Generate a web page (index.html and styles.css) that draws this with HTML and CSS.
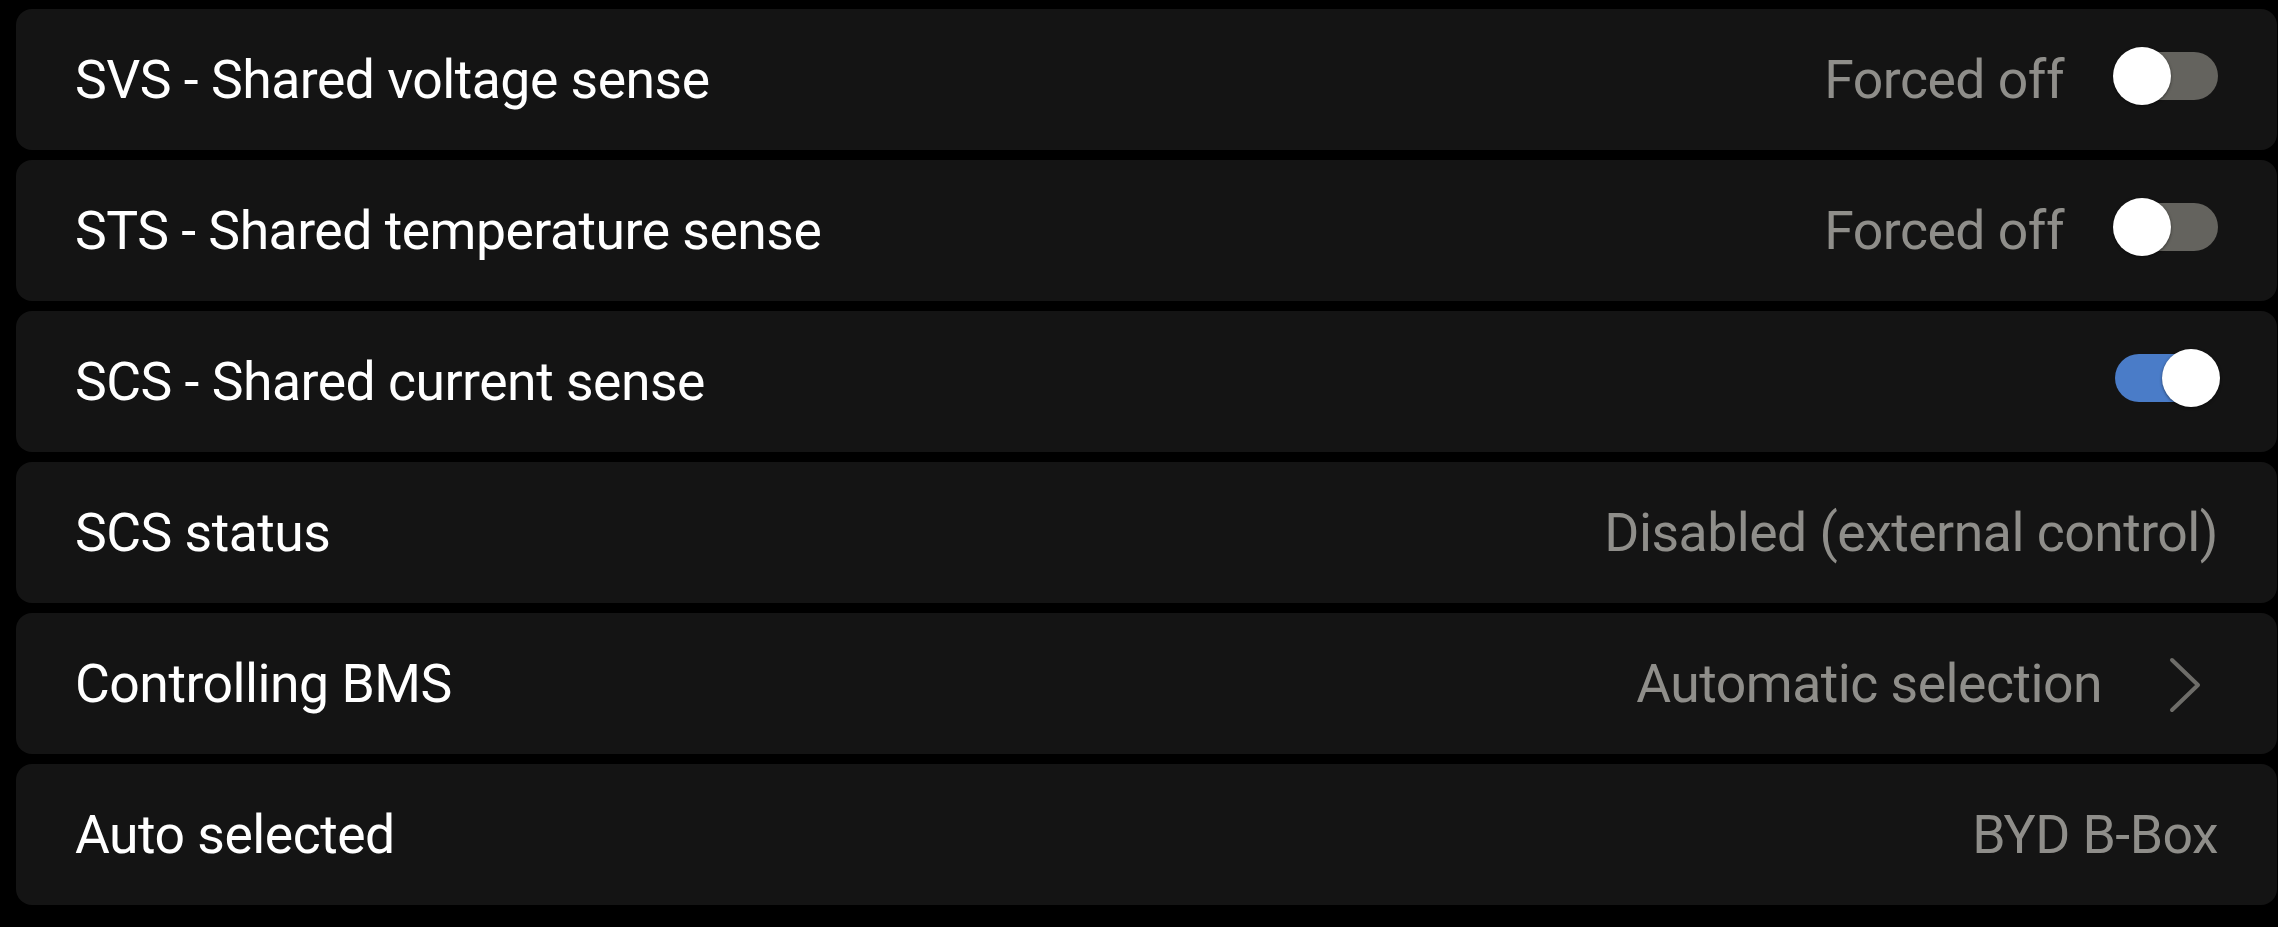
FILE: index.html
```html
<!DOCTYPE html>
<html>
<head>
  <title>Shared sensing</title>
  <link rel="stylesheet" href="styles.css">
</head>
<body>
  <div class="settings-list">

    <div class="setting-row">
      <span class="setting-label">SVS - Shared voltage sense</span>
      <div class="setting-right">
        <span class="setting-value">Forced off</span>
        <div class="switch"><div class="switch-track"></div><div class="switch-knob"></div></div>
      </div>
    </div>

    <div class="setting-row">
      <span class="setting-label">STS - Shared temperature sense</span>
      <div class="setting-right">
        <span class="setting-value">Forced off</span>
        <div class="switch"><div class="switch-track"></div><div class="switch-knob"></div></div>
      </div>
    </div>

    <div class="setting-row">
      <span class="setting-label">SCS - Shared current sense</span>
      <div class="setting-right">
        <div class="switch on"><div class="switch-track"></div><div class="switch-knob"></div></div>
      </div>
    </div>

    <div class="setting-row">
      <span class="setting-label">SCS status</span>
      <div class="setting-right">
        <span class="setting-value">Disabled (external control)</span>
      </div>
    </div>

    <div class="setting-row">
      <span class="setting-label">Controlling BMS</span>
      <div class="setting-right">
        <span class="setting-value">Automatic selection</span>
        <div class="chevron">
          <svg width="32" height="56" viewBox="0 0 32 56">
            <polyline points="3,3 29,28 3,53" fill="none" stroke="#6e6d69" stroke-width="4" stroke-linecap="round" stroke-linejoin="round"/>
          </svg>
        </div>
      </div>
    </div>

    <div class="setting-row">
      <span class="setting-label">Auto selected</span>
      <div class="setting-right">
        <span class="setting-value">BYD B-Box</span>
      </div>
    </div>

  </div>
</body>
</html>
```

FILE: styles.css
```css
html, body {
  background-color: #000;
}

body {
  margin: 0;
  padding: 9px 1px 0 16px;
  font-family: Roboto, "Liberation Sans", Arial, sans-serif;
}

.settings-list {
  display: flex;
  flex-direction: column;
  gap: 10px;
}

.setting-row {
  display: flex;
  align-items: center;
  justify-content: space-between;
  height: 141px;
  padding: 0 59px;
  background-color: #141414;
  border-radius: 16px;
}

.setting-label {
  color: #fff;
  font-size: 53.5px;
  letter-spacing: -0.5px;
}

.setting-right {
  display: flex;
  align-items: center;
  gap: 49px;
}

.setting-value {
  color: #8f8e8a;
  font-size: 53.5px;
  letter-spacing: -0.5px;
}

/* toggle switch */
.switch {
  position: relative;
  width: 107px;
  height: 58px;
  margin-right: -2px;
  margin-bottom: 7px;
}

.switch-track {
  position: absolute;
  left: 2px;
  top: 5px;
  width: 103px;
  height: 48px;
  border-radius: 24px;
  background-color: #64635e;
}

.switch-knob {
  position: absolute;
  left: 0;
  top: 0;
  width: 58px;
  height: 58px;
  border-radius: 50%;
  background-color: #fff;
  box-shadow: 0 1px 3px rgba(0, 0, 0, 0.5);
}

.switch.on .switch-track {
  background-color: #4a7cc8;
}

.switch.on .switch-knob {
  left: 49px;
}

.chevron {
  display: flex;
  align-items: center;
  justify-content: center;
  width: 66px;
  margin-left: 1px;
  margin-top: 3px;
}

.chevron svg {
  display: block;
}
```
